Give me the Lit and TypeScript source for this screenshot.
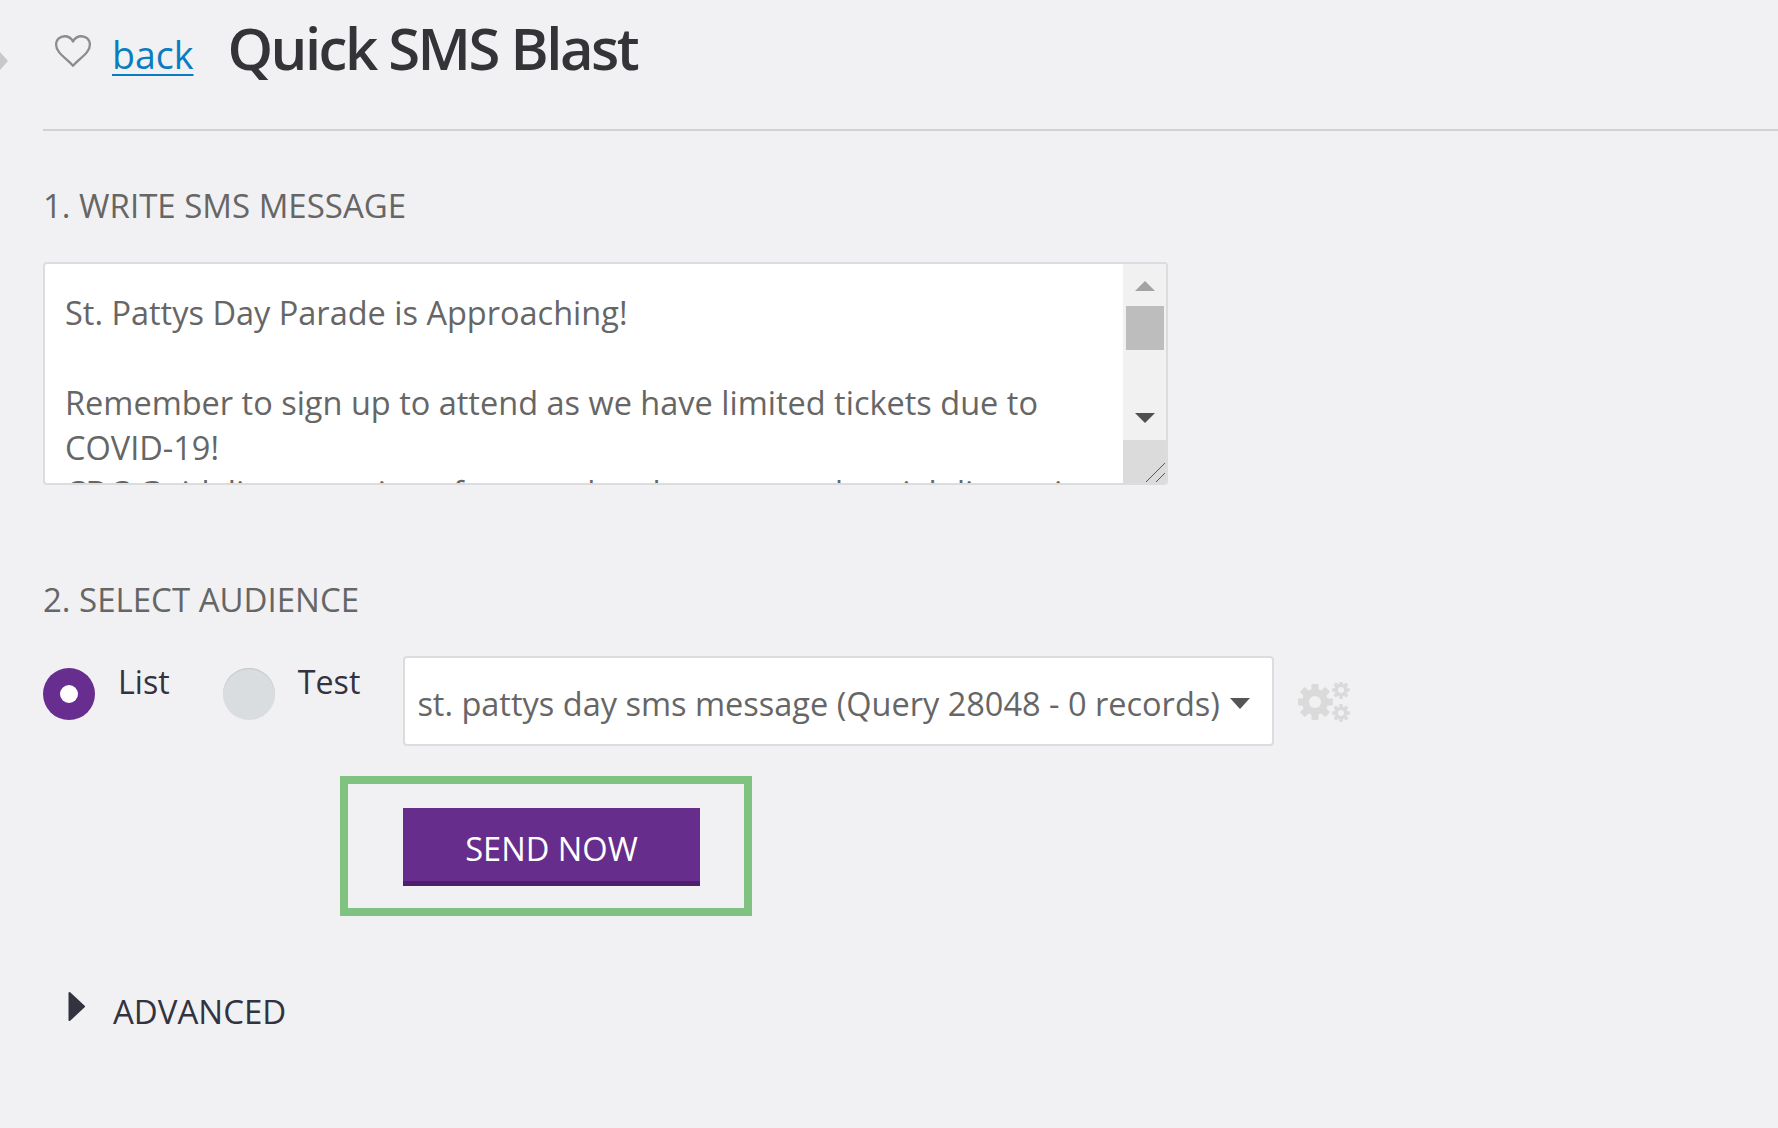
import { LitElement, html, css, svg } from "lit";
import { customElement } from "lit/decorators.js";

@customElement("app-root")
export class AppRoot extends LitElement {
  static styles = css`
    :host {
      display: block;
      position: relative;
      height: 1128px;
      overflow: hidden;
      background: #f1f1f3;
      font-family: "Open Sans", sans-serif;
      color: #666;
    }
    .edge-arrow { position: absolute; left: 0; top: 52px; display: block; }
    .page { padding-left: 43px; display: flex; flex-direction: column; align-items: flex-start; }
    .head {
      align-self: stretch;
      height: 129px;
      border-bottom: 2px solid #d2d2d4;
      display: flex;
      align-items: flex-start;
    }
    .heart { margin: 34px 0 0 11px; display: block; }
    .back {
      margin: 29px 0 0 20px;
      font-size: 37.5px;
      line-height: 52px;
      color: #0a7dc2;
      text-decoration: underline;
      text-decoration-thickness: 2px;
      text-underline-offset: 5px;
    }
    h1 {
      margin: 9px 0 0 34px;
      font-size: 58px;
      line-height: 78px;
      font-weight: 600;
      letter-spacing: -2.5px;
      color: #333338;
    }
    .step { margin: 0; font-size: 33px; line-height: 44px; font-weight: 400; color: #666; }
    .step.one { margin-top: 53px; }
    .step.two { margin-top: 93px; }
    .box {
      margin-top: 34px;
      width: 1125px;
      height: 223px;
      box-sizing: border-box;
      border: 2px solid #dcdcde;
      border-radius: 4px;
      background: #fff;
      display: flex;
      overflow: hidden;
    }
    .msg {
      flex: 1;
      min-width: 0;
      padding: 26px 0 0 20px;
      font-size: 32.5px;
      line-height: 45px;
      color: #666;
      white-space: nowrap;
      overflow: hidden;
    }
    .msg div { height: 45px; }
    .scroll { width: 43px; flex: none; background: #f1f1f1; display: flex; flex-direction: column; align-items: center; }
    .up { margin-top: 17px; width: 0; height: 0; border: 10px solid transparent; border-top: 0; border-bottom: 10px solid #a3a3a3; }
    .thumb { margin: 15px 0 0 1px; width: 38px; height: 44px; background: #bdbdbd; }
    .down { margin-top: 63px; width: 0; height: 0; border: 10px solid transparent; border-bottom: 0; border-top: 10px solid #505050; }
    .corner { margin-top: 17px; align-self: stretch; flex: 1; background: #dbdbdb; display: flex; justify-content: flex-end; align-items: flex-end; }
    .corner svg { display: block; }
    .audience { margin-top: 35px; display: flex; align-items: flex-start; }
    .radio { width: 52px; height: 52px; border-radius: 50%; margin-top: 11px; flex: none; box-sizing: border-box; }
    .radio.on { background: #672e90; display: flex; align-items: center; justify-content: center; }
    .radio.on::after { content: ""; width: 18px; height: 18px; border-radius: 50%; background: #fff; }
    .radio.off { background: #dadddf; margin-left: 53px; box-shadow: inset 0 1px 1px #c4c7c9; }
    .label { font-size: 32.2px; line-height: 44px; color: #333340; margin-top: 3px; }
    .label.list { margin-left: 23px; }
    .label.test { margin-left: 23px; }
    .select {
      margin-left: 43px;
      width: 871px;
      height: 90px;
      box-sizing: border-box;
      margin-top: -1px;
      background: #fff;
      border: 2px solid #dcdcde;
      border-radius: 4px;
      padding: 5px 0 0 12px;
      display: flex;
      align-items: center;
      font-size: 32.5px;
      color: #666;
      white-space: nowrap;
    }
    .caret { margin-left: 10px; width: 0; height: 0; border: 10px solid transparent; border-bottom: 0; border-top: 11px solid #555; }
    .gears { margin: 25px 0 0 24px; display: block; flex: none; }
    .annot {
      margin: 30px 0 0 297px;
      width: 412px;
      height: 140px;
      box-sizing: border-box;
      border: 8px solid #80c280;
      padding: 24px 0 0 55px;
    }
    .send {
      width: 297px;
      height: 78px;
      box-sizing: border-box;
      background: #662d8c;
      border-bottom: 5px solid #4f1f6e;
      color: #fff;
      font-size: 32.6px;
      display: flex;
      align-items: center;
      justify-content: center;
      padding-top: 7px;
    }
    .adv { margin: 74px 0 0 25px; display: flex; align-items: flex-start; }
    .adv svg { display: block; margin-top: 2px; }
    .adv span { margin-left: 28px; font-size: 33px; line-height: 44px; color: #333340; }
  `;

  private gear(cx: number, cy: number, r: number, hole: number) {
    const teeth = [0, 45, 90, 135];
    const w = r * 0.55;
    const span = r * 1.38;
    return svg`
      ${teeth.map(
        (a) => svg`<rect x=${cx - w / 2} y=${cy - span} width=${w} height=${span * 2} rx="1" transform="rotate(${a} ${cx} ${cy})"></rect>`
      )}
      <circle cx=${cx} cy=${cy} r=${r}></circle>
      <circle cx=${cx} cy=${cy} r=${hole} fill="#f1f1f3"></circle>
    `;
  }

  render() {
    return html`
      <svg class="edge-arrow" width="8" height="18" viewBox="0 0 8 18"><path d="M0 0 L8 9 L0 18 Z" fill="#c8c8c8"></path></svg>
      <div class="page">
        <div class="head">
          <svg class="heart" width="38" height="34" viewBox="0 0 36 32" fill="none" stroke="#8c8c8c" stroke-width="2.2" stroke-linejoin="round">
            <path d="M18 30 C12 23 2 18 2 10 C2 5 6 2 10 2 C13.5 2 16.5 4 18 7 C19.5 4 22.5 2 26 2 C30 2 34 5 34 10 C34 18 24 23 18 30 Z"></path>
          </svg>
          <a class="back">back</a>
          <h1>Quick SMS Blast</h1>
        </div>
        <h2 class="step one">1. WRITE SMS MESSAGE</h2>
        <div class="box">
          <div class="msg">
            <div>St. Pattys Day Parade is Approaching!</div>
            <div></div>
            <div>Remember to sign up to attend as we have limited tickets due to</div>
            <div>COVID-19!</div>
            <div>CDC Guidelines require a face mask to be worn and social distancing</div>
          </div>
          <div class="scroll">
            <div class="up"></div>
            <div class="thumb"></div>
            <div class="down"></div>
            <div class="corner">
              <svg width="22" height="22" viewBox="0 0 22 22" stroke="#555" stroke-width="1" fill="none"><path d="M2 21 L21 2 M12 21 L21 12"></path></svg>
            </div>
          </div>
        </div>
        <h2 class="step two">2. SELECT AUDIENCE</h2>
        <div class="audience">
          <div class="radio on"></div>
          <div class="label list">List</div>
          <div class="radio off"></div>
          <div class="label test">Test</div>
          <div class="select">st. pattys day sms message (Query 28048 - 0 records)<span class="caret"></span></div>
          <svg class="gears" width="52" height="41" viewBox="0 0 52 41" fill="#dadada">
            ${this.gear(17, 20, 13, 6)}
            ${this.gear(43, 8, 6.5, 3)}
            ${this.gear(43, 31, 6.5, 3)}
          </svg>
        </div>
        <div class="annot"><div class="send">SEND NOW</div></div>
        <div class="adv">
          <svg width="17" height="29" viewBox="0 0 17 29"><path d="M1.5 1 L16 14.5 L1.5 28 Z" fill="#333340" stroke="#333340" stroke-width="2" stroke-linejoin="round"></path></svg>
          <span>ADVANCED</span>
        </div>
      </div>
    `;
  }
}
